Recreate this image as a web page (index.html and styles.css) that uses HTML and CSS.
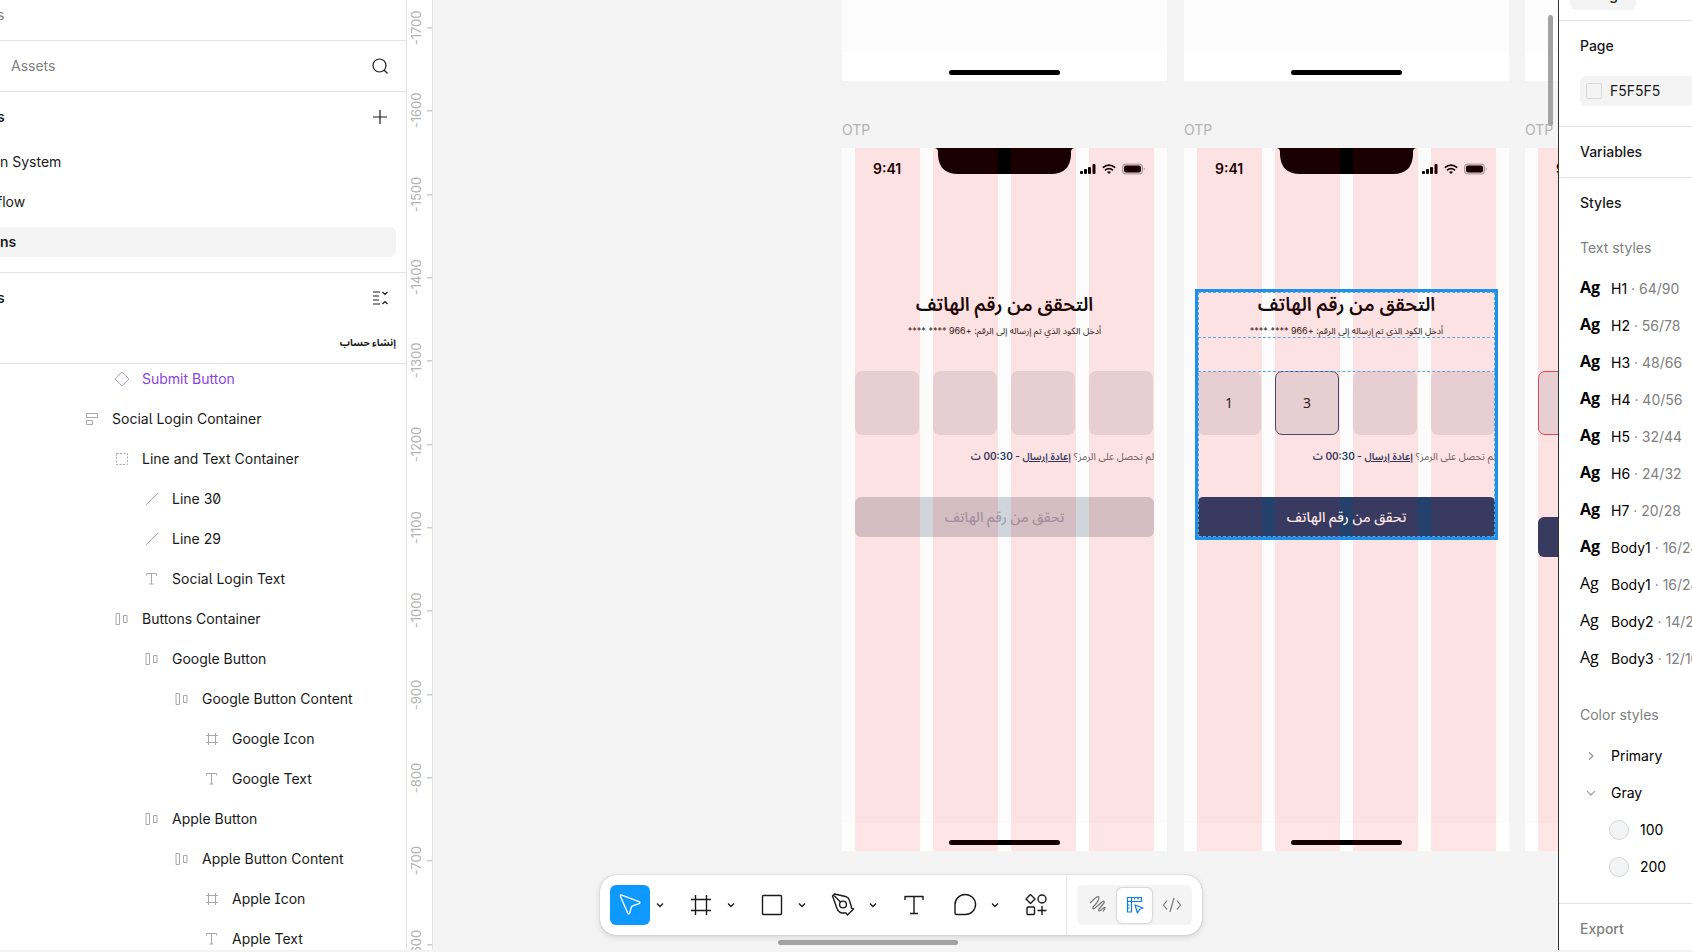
FILE: index.html
```html
<!DOCTYPE html>
<html lang="en">
<head>
  <meta charset="UTF-8" />
  <title>OTP screens</title>
  <meta name="viewport" content="width=device-width, initial-scale=1" />
  <link rel="stylesheet" href="styles.css">
</head>
<body>
  <!-- shared icons -->
  <svg class="sprite" aria-hidden="true">
    <symbol id="i-stack" viewBox="0 0 16 16"><path d="M2.500 2.500h11v4h-11zM2.500 9.500h6v4h-6z"/></symbol>
    <symbol id="i-row" viewBox="0 0 16 16"><path d="M2 2.500h3.500v11H2zM9.500 4.500h3.500v7H9.500z"/></symbol>
    <symbol id="i-group" viewBox="0 0 16 16"><path stroke-dasharray="2 1.500" d="M2.500 2.500h11v11h-11z"/></symbol>
    <symbol id="i-line" viewBox="0 0 16 16"><path d="M2 14L14 2"/></symbol>
    <symbol id="i-text" viewBox="0 0 16 16"><path d="M2.500 4.500v-2h10v2M7.500 2.500v10.500M5.500 13h4"/></symbol>
    <symbol id="i-frame" viewBox="0 0 16 16"><path d="M4.500 2v12M11.500 2v12M2 4.500h12M2 11.500h12"/></symbol>
    <symbol id="i-diamond" viewBox="0 0 16 16"><path d="M8 1l7 7-7 7-7-7z"/></symbol>
    <symbol id="i-chev" viewBox="0 0 8 8"><path d="M1 2.500L4 5.500 7 2.500"/></symbol>
    <symbol id="i-notch" viewBox="0 0 141 26"><path d="M0 0h141q-4 0-4 4v3q-1 19-20 19H24Q5 26 4 7V4q0-4-4-4z"/></symbol>
    <symbol id="i-status" viewBox="0 0 66 12">
      <rect x="0" y="8" width="3" height="3" rx="1"/><rect x="4" y="6" width="3" height="5" rx="1"/><rect x="8" y="4" width="3" height="7" rx="1"/><rect x="12.500" y="1" width="3" height="10" rx="1"/>
      <g fill="none" stroke="#000" stroke-width="1.800"><path d="M22.800 4.600q6.200-5 12.400 0"/><path d="M25 7.200q4-3.200 8 0"/></g><path d="M27 9q2-1.500 4 0l-2 2z"/>
      <rect x="42.500" y="1" width="20" height="10" rx="3" fill="#000" fill-opacity=".1" stroke="#000" stroke-opacity=".3"/><rect x="44" y="2.500" width="17" height="7" rx="2"/><path fill-opacity=".35" d="M63.800 4.500q2 1.500 0 3z"/>
    </symbol>
  </svg>

  <div class="app">
    <aside class="sidebar">
      <div class="file-row cut">s</div>
      <div class="tabs-row"><a href="#" class="tab">Assets</a>
        <button class="icon-btn" aria-label="Search"><svg viewBox="0 0 16 16"><circle cx="7.500" cy="7.500" r="6.500"/><path d="M12 12l3.500 3.500"/></svg></button>
      </div>
      <section class="pages">
        <header class="side-head cut">s
          <button class="icon-btn" aria-label="Add page"><svg viewBox="0 0 16 16"><path d="M8 1v14M1 8h14"/></svg></button>
        </header>
        <a href="#" class="page">n System</a>
        <a href="#" class="page cut">flow</a>
        <a href="#" class="page current">ns</a>
      </section>
      <header class="side-head cut">s
        <button class="icon-btn" aria-label="Collapse layers"><svg viewBox="0 0 16 16"><path d="M1 2h7M1 6h6M1 10h6M1 14h7M10.500 2L13 4.500 15.500 2M10.500 14l2.500-2.500 2.500 2.500"/></svg></button>
      </header>
      <div class="parent-layer" lang="ar" dir="rtl">إنشاء حساب</div>
      <ul class="layers">
        <li class="l2 component"><svg><use href="#i-diamond"/></svg>Submit Button</li>
        <li class="l1"><svg><use href="#i-stack"/></svg>Social Login Container</li>
        <li class="l2"><svg><use href="#i-group"/></svg>Line and Text Container</li>
        <li class="l3"><svg><use href="#i-line"/></svg>Line 30</li>
        <li class="l3"><svg><use href="#i-line"/></svg>Line 29</li>
        <li class="l3"><svg><use href="#i-text"/></svg>Social Login Text</li>
        <li class="l2"><svg><use href="#i-row"/></svg>Buttons Container</li>
        <li class="l3"><svg><use href="#i-row"/></svg>Google Button</li>
        <li class="l4"><svg><use href="#i-row"/></svg>Google Button Content</li>
        <li class="l5"><svg><use href="#i-frame"/></svg>Google Icon</li>
        <li class="l5"><svg><use href="#i-text"/></svg>Google Text</li>
        <li class="l3"><svg><use href="#i-row"/></svg>Apple Button</li>
        <li class="l4"><svg><use href="#i-row"/></svg>Apple Button Content</li>
        <li class="l5"><svg><use href="#i-frame"/></svg>Apple Icon</li>
        <li class="l5"><svg><use href="#i-text"/></svg>Apple Text</li>
      </ul>
    </aside>

    <div class="ruler">
      <div class="marks">
        <span>-1700</span><span>-1600</span><span>-1500</span><span>-1400</span><span>-1300</span><span>-1200</span>
        <span>-1100</span><span>-1000</span><span>-900</span><span>-800</span><span>-700</span><span>-600</span>
      </div>
    </div>

    <main class="canvas">
      <div class="prev col-1"><i class="home"></i></div>
      <div class="prev col-2"><i class="home"></i></div>
      <div class="prev col-3"></div>

      <section class="frame col-1">
        <h3 class="frame-name">OTP</h3>
        <div class="board">
          <svg class="notch"><use href="#i-notch"/></svg>
          <div class="status"><b>9:41</b><svg><use href="#i-status"/></svg></div>
          <form class="otp">
            <h2 lang="ar" dir="rtl">التحقق من رقم الهاتف</h2>
            <p class="hint" lang="ar" dir="rtl">أدخل الكود الذي تم إرساله إلى الرقم: +966 **** ****</p>
            <div class="digits">
              <input maxlength="1" aria-label="Digit 1"><input maxlength="1" aria-label="Digit 2"><input maxlength="1" aria-label="Digit 3"><input maxlength="1" aria-label="Digit 4">
            </div>
            <p class="resend" lang="ar" dir="rtl">لم تحصل على الرمز؟ <b><a href="#">إعادة إرسال</a> - 00:30 ث</b></p>
            <button type="button" class="verify disabled" lang="ar" dir="rtl">تحقق من رقم الهاتف</button>
          </form>
          <div class="home-area"><i class="home"></i></div>
          <div class="guides"><i></i><i></i><i></i><i></i></div>
        </div>
      </section>

      <section class="frame col-2">
        <h3 class="frame-name">OTP</h3>
        <div class="board">
          <svg class="notch"><use href="#i-notch"/></svg>
          <div class="status"><b>9:41</b><svg><use href="#i-status"/></svg></div>
          <form class="otp">
            <h2 lang="ar" dir="rtl">التحقق من رقم الهاتف</h2>
            <p class="hint" lang="ar" dir="rtl">أدخل الكود الذي تم إرساله إلى الرقم: +966 **** ****</p>
            <div class="digits">
              <input maxlength="1" value="1" aria-label="Digit 1"><input maxlength="1" value="3" class="focus" aria-label="Digit 2"><input maxlength="1" aria-label="Digit 3"><input maxlength="1" aria-label="Digit 4">
            </div>
            <p class="resend" lang="ar" dir="rtl">لم تحصل على الرمز؟ <b><a href="#">إعادة إرسال</a> - 00:30 ث</b></p>
            <button type="button" class="verify" lang="ar" dir="rtl">تحقق من رقم الهاتف</button>
            <div class="selection"><i></i></div>
          </form>
          <div class="home-area"><i class="home"></i></div>
          <div class="guides"><i></i><i></i><i></i><i></i></div>
        </div>
      </section>

      <section class="frame col-3">
        <h3 class="frame-name">OTP</h3>
        <div class="board">
          <div class="status"><b>9:41</b></div>
          <form class="otp invalid">
            <div class="digits"><input maxlength="1" aria-label="Digit 1"></div>
            <button type="button" class="verify" aria-label="Verify"></button>
          </form>
          <div class="home-area"></div>
          <div class="guides"><i></i><i></i><i></i><i></i></div>
        </div>
      </section>

      <div class="scroll-y"></div>
      <div class="scroll-x"></div>

      <nav class="toolbar">
        <div class="tools">
          <div class="tool">
            <button class="main active" aria-label="Move"><svg viewBox="0 0 24 24"><path d="M2.500 3.500Q1.800 1.600 3.700 2.200L21 8.700q2 .9 0 1.900l-6.300 2.200q-.8.300-1.100 1.100L11.600 20q-.9 2-1.900 0z"/></svg></button>
            <button class="more" aria-label="Move options"><svg><use href="#i-chev"/></svg></button>
          </div>
          <div class="tool">
            <button class="main" aria-label="Frame"><svg viewBox="0 0 24 24"><path d="M6.500 2v20M17.500 2v20M2 6.500h20M2 17.500h20"/></svg></button>
            <button class="more" aria-label="Frame options"><svg><use href="#i-chev"/></svg></button>
          </div>
          <div class="tool">
            <button class="main" aria-label="Rectangle"><svg viewBox="0 0 24 24"><rect x="2.500" y="2.500" width="19" height="19" rx="1"/></svg></button>
            <button class="more" aria-label="Shape options"><svg><use href="#i-chev"/></svg></button>
          </div>
          <div class="tool">
            <button class="main" aria-label="Pen"><svg viewBox="0 0 24 24"><path d="M1.500 3l2-2 12 2.800q2 .6 2.700 3l2 6.200.3 2.200 2 .8-6 6-1.500-2H11q-3.500-.6-5-4.500zM2.500 2l7 7"/><circle cx="12" cy="11.500" r="3.400"/></svg></button>
            <button class="more" aria-label="Pen options"><svg><use href="#i-chev"/></svg></button>
          </div>
          <div class="tool">
            <button class="main" aria-label="Text"><svg viewBox="0 0 24 24"><path d="M3 7V3.500h18V7M12 3.500v17M8 20.500h8"/></svg></button>
          </div>
          <div class="tool">
            <button class="main" aria-label="Comment"><svg viewBox="0 0 24 24"><path d="M3.500 21.500q-1.500 0-1.500-1.500v-8a10.300 10 0 1 1 10.300 9.500z"/></svg></button>
            <button class="more" aria-label="Comment options"><svg><use href="#i-chev"/></svg></button>
          </div>
          <div class="tool">
            <button class="main" aria-label="Actions"><svg viewBox="0 0 24 24"><path d="M6.500 1.500L11 6l-4.500 4.500L2 6zM18 13v9M13.500 17.500h9"/><circle cx="18" cy="6" r="4"/><rect x="3" y="14" width="7.500" height="7.500" rx="1"/></svg></button>
          </div>
        </div>
        <div class="modes">
          <button class="mode" aria-label="Draw"><svg viewBox="0 0 20 20"><path d="M2 8q9-9 9-5.500T5 12q-1 3 2 1l7-6q3-2 2 1l-5 6q-1 3 1.500 1.500l3-2.500q2-1.500 1.500 .5l-2 3"/></svg></button>
          <button class="mode on" aria-label="Design"><svg viewBox="0 0 20 20"><path d="M2.500 2.500h14v4h-10v10.500h-4zM6.500 2.500v4M2.500 6.500h4M9.500 2.500v2M13 2.500v2M2.500 10h2M2.500 13h2"/><path d="M10 10l8 3-3.500 1.500L12.500 18z"/></svg></button>
          <button class="mode" aria-label="Dev mode"><svg viewBox="0 0 20 20"><path d="M5 5.500L1.500 10 5 14.500M15 5.500l3.500 4.500-3.500 4.500M12 3L8 17"/></svg></button>
        </div>
      </nav>
    </main>

    <aside class="props">
      <div class="props-tabs"><button class="tab-btn">Design</button></div>
      <section class="block page-block">
        <h4>Page</h4>
        <label class="color"><i></i><input value="F5F5F5" aria-label="Page color"></label>
      </section>
      <section class="block"><h4>Variables</h4></section>
      <section class="block styles-block">
        <h4>Styles</h4>
        <h5 class="text-title">Text styles</h5>
        <ul class="styles">
          <li><b>Ag</b>H1<span> · 64/90</span></li>
          <li><b>Ag</b>H2<span> · 56/78</span></li>
          <li><b>Ag</b>H3<span> · 48/66</span></li>
          <li><b>Ag</b>H4<span> · 40/56</span></li>
          <li><b>Ag</b>H5<span> · 32/44</span></li>
          <li><b>Ag</b>H6<span> · 24/32</span></li>
          <li><b>Ag</b>H7<span> · 20/28</span></li>
          <li><b>Ag</b>Body1<span> · 16/24</span></li>
          <li><b class="regular">Ag</b>Body1<span> · 16/24</span></li>
          <li><b class="regular">Ag</b>Body2<span> · 14/20</span></li>
          <li><b class="regular">Ag</b>Body3<span> · 12/16</span></li>
        </ul>
        <h5 class="color-title">Color styles</h5>
        <ul class="styles">
          <li><svg class="closed"><use href="#i-chev"/></svg>Primary</li>
          <li><svg><use href="#i-chev"/></svg>Gray</li>
          <li class="swatch"><i></i>100</li>
          <li class="swatch"><i></i>200</li>
        </ul>
      </section>
      <section class="block export"><h4>Export</h4></section>
    </aside>
  </div>
</body>
</html>
```
FILE: styles.css
```css
* {
  margin: 0; padding: 0; box-sizing: border-box;
}

body {
  height: 100vh;
  padding-bottom: 2px;
  overflow: hidden;
  font-family: Inter, "Noto Sans Arabic", "DejaVu Sans", sans-serif;
  font-size: 14px;
  line-height: 20px;
  color: #1a1a1a;
  background: #f3f3f3;
}

a { color: inherit; text-decoration: none; }
ul { list-style: none; }
button { border: none; background: none; font: inherit; color: inherit; cursor: pointer; }
svg { fill: none; stroke: currentColor; display: block; flex-shrink: 0; }
.sprite { position: absolute; width: 0; height: 0; }

.app {
  display: grid;
  grid-template-columns: 407px 26px 1fr 134px;
  height: 100%;
}

/* left sidebar */
.sidebar {
  background: #fff;
  border-right: 1px solid #e3e3e3;
  overflow: hidden;
  min-height: 0;
}

.file-row, .tabs-row { border-bottom: 1px solid #e3e3e3; }
.file-row { height: 41px; padding-top: 5px; color: #808080; }

.tabs-row, .side-head {
  display: flex;
  align-items: center;
  justify-content: space-between;
  padding-right: 18px;
}

.tabs-row { height: 51px; }
.tab { padding-left: 11px; color: #808080; }
.icon-btn { width: 16px; height: 16px; text-indent: 0; }
.icon-btn svg { width: 16px; height: 16px; stroke-width: 1.2; }

.side-head { height: 50px; font-weight: 600; }
.pages { border-bottom: 1px solid #e3e3e3; padding-bottom: 15px; }
.page {
  display: block;
  height: 30px;
  line-height: 30px;
  margin: 0 10px 10px 0;
}
/* labels running under the left edge */
.cut { text-indent: -3px; }
.pages .side-head { margin-bottom: 5px; }
.page.current {
  background: #f4f4f4;
  border-radius: 0 6px 6px 0;
  font-weight: 600;
  margin-bottom: 0;
}

.parent-layer {
  height: 41px;
  padding: 9px 10px 0;
  font-size: 10px;
  font-weight: 700;
  border-bottom: 1px solid #e3e3e3;
}

.layers { margin-top: -5px; font-feature-settings: "ss02"; }
.layers li {
  display: flex;
  align-items: center;
  gap: 12px;
  height: 40px;
}
.layers svg { width: 16px; height: 16px; color: #a8a8a8; }
.layers .component { color: #8a43e1; }
.layers .component svg { color: #b9a6d6; }
.l1 { padding-left: 84px; }
.l2 { padding-left: 114px; }
.l3 { padding-left: 144px; }
.l4 { padding-left: 174px; }
.l5 { padding-left: 204px; }

/* ruler */
.ruler {
  background: #fff;
  border-right: 1px solid #e3e3e3;
  overflow: hidden;
  min-height: 0;
}
.marks {
  display: flex;
  flex-direction: column;
  height: 1000px;
  margin-top: -14px;
}
.marks span {
  flex: 1;
  writing-mode: vertical-rl;
  transform: rotate(180deg);
  text-align: center;
  line-height: 18px;
  font-size: 13px;
  color: #b3b3b3;
  background: linear-gradient(#b3b3b3, #b3b3b3) left center / 5px 1px no-repeat;
}

/* canvas */
.canvas {
  position: relative;
  overflow: hidden;
  background: #f4f4f4;
}

.prev, .frame { position: absolute; width: 325px; }
.col-1 { left: 409px; }
.col-2 { left: 751px; }
.col-3 { left: 1092px; }

.prev {
  top: 0;
  height: 81px;
  display: flex;
  align-items: flex-end;
  background: linear-gradient(#fcfcfc 52px, #fff 52px);
}
.home {
  display: block;
  width: 111px;
  height: 5px;
  margin: 0 auto 6px;
  border-radius: 3px;
  background: #000;
}

.frame { top: 120px; }
.frame-name {
  height: 28px;
  font-size: 14px;
  font-weight: 400;
  color: #b3b3b3;
}
.board {
  position: relative;
  background: #fcfcfc;
}
.notch {
  position: absolute;
  top: 0;
  left: 92px;
  width: 141px;
  height: 26px;
  fill: #000;
  stroke: none;
}
.status {
  display: flex;
  justify-content: space-between;
  padding: 11px 21px 0 31px;
  height: 44px;
  color: #000;
}
.status b { font-weight: 600; }
.status svg { width: 66px; height: 12px; margin-top: 4px; fill: #000; stroke: none; }

/* red layout grid sits above everything on the board */
.guides {
  position: absolute;
  inset: 0 13px;
  display: grid;
  grid-template-columns: repeat(4, 1fr);
  gap: 13px;
  pointer-events: none;
}
.guides i { background: rgba(255, 0, 0, 0.1); }

.otp {
  position: relative;
  margin: 99px 13px 0;
  height: 532px;
  display: flex;
  flex-direction: column;
}
.otp h2 {
  text-align: center;
  font-size: 19px;
  line-height: 28px;
  font-weight: 600;
  color: #0a0a0a;
}
.hint {
  margin-top: 4px;
  text-align: center;
  font-size: 9px;
  line-height: 16px;
  color: #222;
}
.digits {
  display: flex;
  gap: 14px;
  margin-top: 32px;
}
.digits input {
  width: 64px;
  height: 64px;
  padding-bottom: 2px;
  border: 1px solid transparent;
  border-radius: 7px;
  background: #e4e6ea;
  text-align: center;
  font: 14px "Noto Sans", sans-serif;
  color: #222;
}
.digits .focus { border-color: #35517a; }
.resend {
  margin-top: 11px;
  font-size: 10px;
  line-height: 20px;
  color: #666;
}
.resend b { font-weight: 600; color: #1f3f68; }
.resend a { text-decoration: underline; }
.verify {
  height: 40px;
  margin-top: 31px;
  border-radius: 6px;
  background: #23416b;
  color: #fff;
  font-size: 14px;
  font-weight: 500;
}
.verify.disabled { background: #d0d4db; color: #9b9fae; }

.invalid .digits { margin-top: 80px; }
.invalid .digits input { border-color: #e0525a; }
.invalid .verify { margin-top: 82px; }

.selection {
  position: absolute;
  z-index: 1;
  inset: -2px -2px auto;
  height: 251px;
  border: 3px solid #1d90ea;
}
.selection::before {
  content: "";
  position: absolute;
  inset: 0;
  border: 1px dashed #5aa7e6;
}
.selection i {
  position: absolute;
  top: 45px;
  left: 0;
  right: 0;
  height: 35px;
  border: dashed #5aa7e6;
  border-width: 1px 0;
}

.home-area {
  height: 28px;
  background: #fff;
  display: flex;
  align-items: flex-end;
}

.scroll-y, .scroll-x { position: absolute; border-radius: 3px; background: #a3a3a3; }
.scroll-y { right: 5px; top: 15px; width: 5px; height: 111px; }
.scroll-x { left: 345px; bottom: 5px; width: 180px; height: 5px; }

/* floating toolbar */
.toolbar {
  position: absolute;
  left: 167px;
  bottom: 15px;
  display: flex;
  height: 60px;
  border-radius: 16px;
  background: #fff;
  box-shadow: 0 0 1px rgba(0, 0, 0, 0.4), 0 2px 6px rgba(0, 0, 0, 0.14);
}
.tools {
  display: flex;
  align-items: center;
  gap: 11px;
  padding: 0 10px;
  border-right: 1px solid #e6e6e6;
}
.tool { display: flex; }
.main {
  display: grid;
  place-items: center;
  width: 40px;
  height: 40px;
  border-radius: 6px;
}
.main svg { width: 24px; height: 24px; stroke-width: 1.4; stroke-linejoin: round; }
.main.active { background: #0d99ff; color: #fff; }
.more { display: grid; place-items: center; width: 20px; }
.more svg { width: 8px; height: 8px; stroke-width: 1.3; }

.modes {
  display: flex;
  align-items: center;
  height: 40px;
  margin: 10px;
  padding: 0 3px;
  gap: 2px;
  border-radius: 6px;
  background: #f4f4f4;
  color: #777;
}
.mode { display: grid; place-items: center; width: 35px; height: 35px; border-radius: 5px; }
.mode svg { width: 20px; height: 20px; stroke-width: 1.2; stroke-linejoin: round; }
.mode.on { background: #fff; color: #0d7ee8; box-shadow: 0 0 2px rgba(0, 0, 0, 0.4); }

/* right panel */
.props {
  border-left: 1px solid #333;
  background: #fff;
  overflow: hidden;
  min-height: 0;
  white-space: nowrap;
}
.props-tabs { height: 21px; border-bottom: 1px solid #e3e3e3; padding-left: 11px; }
.tab-btn {
  display: block;
  width: 66px;
  height: 30px;
  position: relative;
  top: -20px;
  border-radius: 6px;
  background: #f4f4f4;
  font-weight: 500;
}
.block { padding: 15px 0 15px 21px; border-bottom: 1px solid #e3e3e3; }
.block h4 { font-size: 14px; font-weight: 500; }
.block h5 { font-size: 14px; font-weight: 400; color: #808080; }
.page-block { padding-bottom: 20px; }
.color {
  display: flex;
  align-items: center;
  gap: 8px;
  height: 30px;
  margin-top: 20px;
  padding-left: 6px;
  border-radius: 6px 0 0 6px;
  background: #f4f4f4;
}
.color i { width: 16px; height: 16px; border: 1px solid #d9d9d9; border-radius: 2px; }
.color input { width: 80px; border: none; background: none; font: inherit; color: inherit; }

.styles-block { padding-bottom: 18px; }
.text-title { margin: 25px 0 12px; }
.color-title { margin: 28px 0 12px; }
.styles li {
  display: flex;
  align-items: center;
  height: 37px;
  white-space: pre;
  color: #000;
}
.styles span { color: #808080; }
.styles b {
  flex: 0 0 31px;
  font: 700 16px/20px "Open Sans", sans-serif;
  padding-bottom: 3px;
}
.styles b.regular { font-weight: 400; }
.styles svg { width: 10px; height: 10px; margin: 0 15px 0 6px; color: #999; }
.styles .closed { transform: rotate(-90deg); }
.styles .swatch { padding-left: 29px; gap: 11px; }
.swatch i { width: 20px; height: 20px; border-radius: 50%; border: 1px solid #d4d6d8; background: #f3f4f6; }
.export { border: none; }
.export h4 { color: #808080; }
```
